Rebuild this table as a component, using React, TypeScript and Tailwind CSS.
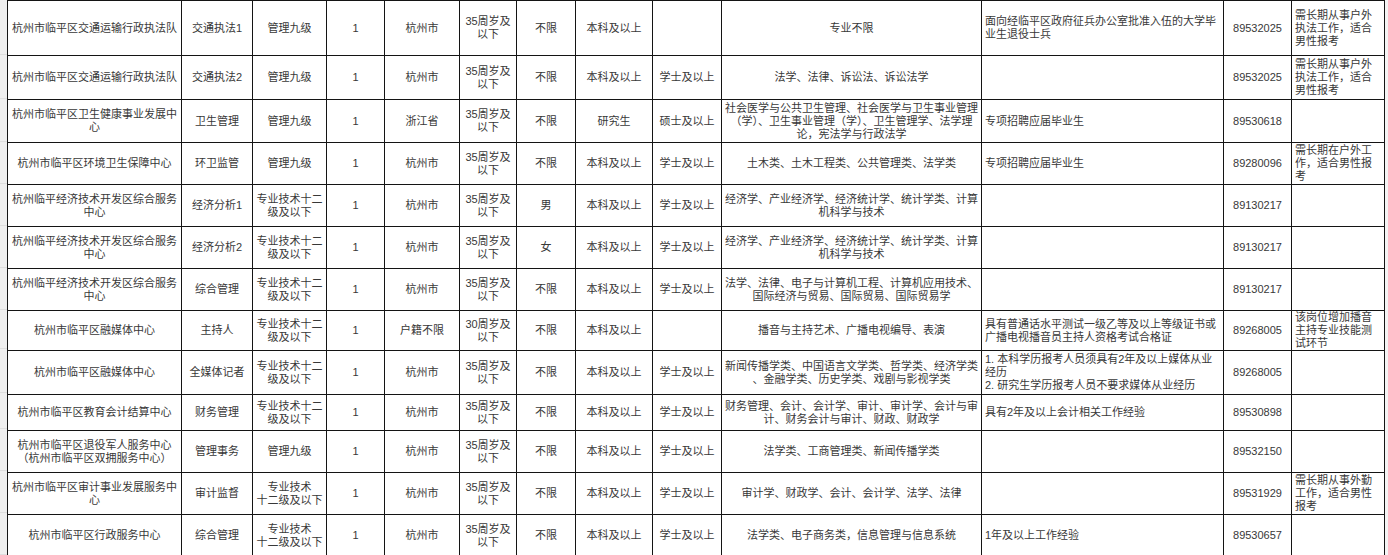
import React from "react";

type Row = { h: number; c: string[] };

const rows: Row[] = [
  {
    h: 55,
    c: [
      "杭州市临平区交通运输行政执法队",
      "交通执法1",
      "管理九级",
      "1",
      "杭州市",
      "35周岁及\n以下",
      "不限",
      "本科及以上",
      "",
      "专业不限",
      "面向经临平区政府征兵办公室批准入伍的大学毕\n业生退役士兵",
      "89532025",
      "需长期从事户外\n执法工作，适合\n男性报考",
    ],
  },
  {
    h: 44,
    c: [
      "杭州市临平区交通运输行政执法队",
      "交通执法2",
      "管理九级",
      "1",
      "杭州市",
      "35周岁及\n以下",
      "不限",
      "本科及以上",
      "学士及以上",
      "法学、法律、诉讼法、诉讼法学",
      "",
      "89532025",
      "需长期从事户外\n执法工作，适合\n男性报考",
    ],
  },
  {
    h: 43,
    c: [
      "杭州市临平区卫生健康事业发展中\n心",
      "卫生管理",
      "管理九级",
      "1",
      "浙江省",
      "35周岁及\n以下",
      "不限",
      "研究生",
      "硕士及以上",
      "社会医学与公共卫生管理、社会医学与卫生事业管理\n（学）、卫生事业管理（学）、卫生管理学、法学理\n论，宪法学与行政法学",
      "专项招聘应届毕业生",
      "89530618",
      "",
    ],
  },
  {
    h: 42,
    c: [
      "杭州市临平区环境卫生保障中心",
      "环卫监管",
      "管理九级",
      "1",
      "杭州市",
      "35周岁及\n以下",
      "不限",
      "本科及以上",
      "学士及以上",
      "土木类、土木工程类、公共管理类、法学类",
      "专项招聘应届毕业生",
      "89280096",
      "需长期在户外工\n作，适合男性报\n考",
    ],
  },
  {
    h: 42,
    c: [
      "杭州临平经济技术开发区综合服务\n中心",
      "经济分析1",
      "专业技术十二\n级及以下",
      "1",
      "杭州市",
      "35周岁及\n以下",
      "男",
      "本科及以上",
      "学士及以上",
      "经济学、产业经济学、经济统计学、统计学类、计算\n机科学与技术",
      "",
      "89130217",
      "",
    ],
  },
  {
    h: 42,
    c: [
      "杭州临平经济技术开发区综合服务\n中心",
      "经济分析2",
      "专业技术十二\n级及以下",
      "1",
      "杭州市",
      "35周岁及\n以下",
      "女",
      "本科及以上",
      "学士及以上",
      "经济学、产业经济学、经济统计学、统计学类、计算\n机科学与技术",
      "",
      "89130217",
      "",
    ],
  },
  {
    h: 42,
    c: [
      "杭州临平经济技术开发区综合服务\n中心",
      "综合管理",
      "专业技术十二\n级及以下",
      "1",
      "杭州市",
      "35周岁及\n以下",
      "不限",
      "本科及以上",
      "学士及以上",
      "法学、法律、电子与计算机工程、计算机应用技术、\n国际经济与贸易、国际贸易、国际贸易学",
      "",
      "89130217",
      "",
    ],
  },
  {
    h: 39,
    c: [
      "杭州市临平区融媒体中心",
      "主持人",
      "专业技术十二\n级及以下",
      "1",
      "户籍不限",
      "30周岁及\n以下",
      "不限",
      "本科及以上",
      "",
      "播音与主持艺术、广播电视编导、表演",
      "具有普通话水平测试一级乙等及以上等级证书或\n广播电视播音员主持人资格考试合格证",
      "89268005",
      "该岗位增加播音\n主持专业技能测\n试环节",
    ],
  },
  {
    h: 44,
    c: [
      "杭州市临平区融媒体中心",
      "全媒体记者",
      "专业技术十二\n级及以下",
      "1",
      "杭州市",
      "35周岁及\n以下",
      "不限",
      "本科及以上",
      "学士及以上",
      "新闻传播学类、中国语言文学类、哲学类、经济学类\n、金融学类、历史学类、戏剧与影视学类",
      "1. 本科学历报考人员须具有2年及以上媒体从业\n经历\n2. 研究生学历报考人员不要求媒体从业经历",
      "89268005",
      "",
    ],
  },
  {
    h: 36,
    c: [
      "杭州市临平区教育会计结算中心",
      "财务管理",
      "专业技术十二\n级及以下",
      "1",
      "杭州市",
      "35周岁及\n以下",
      "不限",
      "本科及以上",
      "学士及以上",
      "财务管理、会计、会计学、审计、审计学、会计与审\n计、财务会计与审计、财政、财政学",
      "具有2年及以上会计相关工作经验",
      "89530898",
      "",
    ],
  },
  {
    h: 42,
    c: [
      "杭州市临平区退役军人服务中心\n（杭州市临平区双拥服务中心）",
      "管理事务",
      "管理九级",
      "1",
      "杭州市",
      "35周岁及\n以下",
      "不限",
      "本科及以上",
      "学士及以上",
      "法学类、工商管理类、新闻传播学类",
      "",
      "89532150",
      "",
    ],
  },
  {
    h: 42,
    c: [
      "杭州市临平区审计事业发展服务中\n心",
      "审计监督",
      "专业技术\n十二级及以下",
      "1",
      "杭州市",
      "35周岁及\n以下",
      "不限",
      "本科及以上",
      "学士及以上",
      "审计学、财政学、会计、会计学、法学、法律",
      "",
      "89531929",
      "需长期从事外勤\n工作，适合男性\n报考",
    ],
  },
  {
    h: 42,
    c: [
      "杭州市临平区行政服务中心",
      "综合管理",
      "专业技术\n十二级及以下",
      "1",
      "杭州市",
      "35周岁及\n以下",
      "不限",
      "本科及以上",
      "学士及以上",
      "法学类、电子商务类，信息管理与信息系统",
      "1年及以上工作经验",
      "89530657",
      "",
    ],
  },
];

const colClasses = [
  "w-[174px]",
  "w-[71px]",
  "w-[74px]",
  "w-[58px]",
  "w-[75px]",
  "w-[57px]",
  "w-[59px]",
  "w-[77px]",
  "w-[69px]",
  "w-[260px]",
  "w-[242px]",
  "w-[68px]",
  "w-[93px]",
];

const rowHeights: Record<number, string> = {
  55: "h-[55px]",
  44: "h-[44px]",
  43: "h-[43px]",
  42: "h-[42px]",
  39: "h-[39px]",
  36: "h-[36px]",
};

export default function App() {
  return (
    <div
      className="flex w-[1388px] h-[555px] overflow-hidden bg-[#f4f4f4] text-[11px] leading-[13px] text-[#383838]"
      style={{ fontFamily: '"Liberation Sans", "Noto Sans CJK SC", sans-serif' }}
    >
      <div className="w-[7px] shrink-0 flex flex-col bg-[#efefef]">
        {rows.map((r, i) => (
          <div key={i} className={`${rowHeights[r.h]} shrink-0 border-b border-[#dedede]`} />
        ))}
      </div>
      <table className="border-collapse table-fixed w-[1378px] bg-white shrink-0 self-start">
        <colgroup>
          {colClasses.map((c, i) => (
            <col key={i} className={c} />
          ))}
        </colgroup>
        <tbody>
          {rows.map((r, ri) => (
            <tr key={ri} className={rowHeights[r.h]}>
              {r.c.map((t, ci) => {
                const left = ci === 10 || ci === 12;
                return (
                  <td
                    key={ci}
                    className={`border border-[#141414] p-0 align-middle whitespace-pre-line overflow-hidden ${
                      left ? "text-left pl-[3px]" : "text-center"
                    }`}
                  >
                    {t}
                  </td>
                );
              })}
            </tr>
          ))}
        </tbody>
      </table>
    </div>
  );
}
